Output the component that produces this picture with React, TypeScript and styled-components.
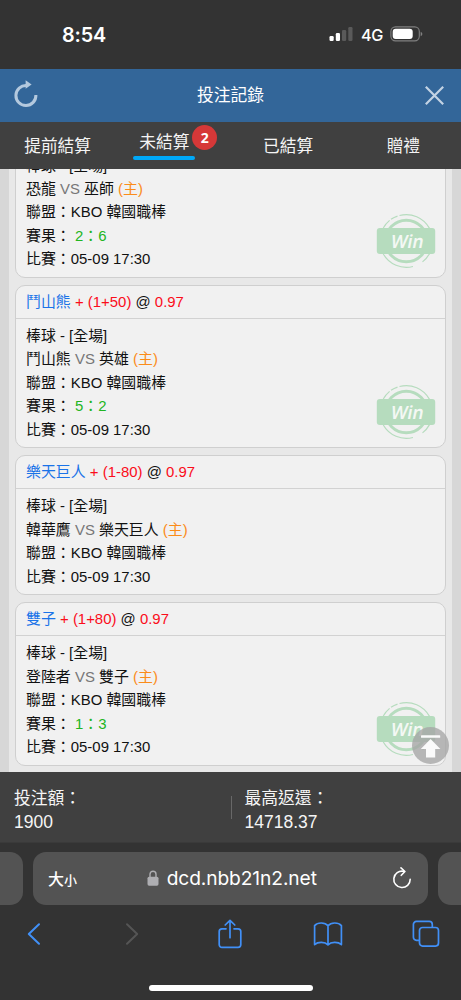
import React from "react";
import styled, { createGlobalStyle } from "styled-components";

const GlobalStyle = createGlobalStyle`
  * { box-sizing: border-box; }
  html, body { margin: 0; padding: 0; background: #333; }
  body { font-family: "Liberation Sans", "Noto Sans CJK TC", sans-serif; }
`;

const Screen = styled.div`
  width: 461px;
  height: 1000px;
  display: flex;
  flex-direction: column;
  overflow: hidden;
  background: #333;
`;

const StatusBar = styled.div`
  height: 69px;
  flex: none;
  display: flex;
  align-items: center;
  justify-content: space-between;
  padding: 0 38px 0 62px;
  color: #fff;
  font-family: Inter, sans-serif;
`;

const Clock = styled.span`
  font-size: 19.8px;
  font-weight: 600;
  line-height: 24px;
  letter-spacing: -0.1px;
`;

const StatusIcons = styled.div`
  display: flex;
  align-items: center;
  margin-top: -1px;
`;

const Network = styled.span`
  margin: 1px 7px 0 8px;
  font-size: 16.2px;
  font-weight: 500;
  line-height: 20px;
  letter-spacing: -0.3px;
`;

const Header = styled.header`
  height: 53px;
  flex: none;
  display: flex;
  align-items: center;
  justify-content: space-between;
  padding: 0 16px 0 13px;
  background: #336699;
`;

const RefreshIcon = styled.svg`
  margin-top: -4px;
`;

const Title = styled.h1`
  margin: 0 2px 0 0;
  font-size: 16.8px;
  font-weight: 400;
  line-height: 24px;
  color: #fff;
`;

const Tabs = styled.nav`
  height: 47px;
  flex: none;
  display: grid;
  grid-template-columns: repeat(4, 1fr);
  background: #404040;
`;

const Tab = styled.div<{ $active?: boolean }>`
  display: flex;
  justify-content: center;
  align-items: flex-start;
  padding: ${(p) => (p.$active ? "9px 17px 0 0" : "13px 0 0 0")};
  font-size: 16.7px;
  line-height: 24px;
  color: #f4f4f4;
`;

const TabLabel = styled.span<{ $active?: boolean }>`
  position: relative;
  padding: 0 6px;
  height: 28.5px;
  white-space: nowrap;
  &::after {
    content: "";
    display: ${(p) => (p.$active ? "block" : "none")};
    height: 4px;
    margin: 0.5px -6px 0;
    border-radius: 2px;
    background: #00a8f8;
  }
`;

const Count = styled.span`
  position: absolute;
  left: 59px;
  top: -6px;
  width: 25px;
  height: 25px;
  border-radius: 50%;
  background: #d63838;
  color: #fff;
  font-family: "Open Sans", sans-serif;
  font-size: 14px;
  font-weight: 700;
  line-height: 25px;
  text-align: center;
`;

const Records = styled.main`
  position: relative;
  height: 603px;
  flex: none;
  padding: 0 9px;
  background: #d7d7d7;
  overflow: hidden;
`;

const Panel = styled.div`
  height: 100%;
  display: flex;
  flex-direction: column;
  justify-content: flex-end;
  gap: 7px;
  padding: 0 6px 6.3px 6px;
  background: #e8e8e8;
`;

const Card = styled.article`
  position: relative;
  flex: none;
  border: 1.4px solid #cfcfcf;
  border-radius: 10px;
  background: #f1f1f1;
  font-size: 14.93px;
  color: #111;
`;

const CardTitle = styled.div`
  height: 33px;
  padding-left: 10px;
  border-bottom: 1.4px solid #d2d2d2;
  line-height: 31.4px;
`;

const CardBody = styled.div`
  padding: 4.9px 10px 6.3px;
`;

const Line = styled.div`
  height: 23.45px;
  line-height: 23.45px;
  white-space: pre;
`;

const tones = {
  team: "#1a73e8",
  odds: "#fb0d1b",
  versus: "#777",
  home: "#fb8c1a",
  score: "#22b522",
};

const Tone = styled.span<{ $tone: keyof typeof tones }>`
  color: ${(p) => tones[p.$tone]};
`;

const Stamp = styled.svg`
  position: absolute;
  right: 9.5px;
  bottom: 7.9px;
`;

const TopButton = styled.button`
  position: absolute;
  left: 412px;
  top: 558px;
  width: 37px;
  height: 37px;
  padding: 0;
  border: 0;
  border-radius: 50%;
  background: rgba(165, 165, 165, 0.78);
`;

const Summary = styled.section`
  height: 71px;
  flex: none;
  display: grid;
  grid-template-columns: 1fr 1fr;
  align-items: start;
  padding-top: 15px;
  background: #404040;
  border-bottom: 1px solid #3a3a3a;
  color: #f5f5f5;
`;

const Stat = styled.div<{ $divided?: boolean }>`
  position: relative;
  padding-left: 14px;
  font-size: 16.8px;
  line-height: 24px;
  &::before {
    content: "";
    display: ${(p) => (p.$divided ? "block" : "none")};
    position: absolute;
    left: 0;
    top: 9px;
    width: 1px;
    height: 23px;
    background: #686868;
  }
`;

const Amount = styled.div`
  font-size: 17.5px;
  line-height: 23px;
`;

const Browser = styled.footer`
  flex: 1;
  display: flex;
  flex-direction: column;
  background: #333;
`;

const AddressRow = styled.div`
  display: grid;
  grid-template-columns: 23px 395px 23px;
  gap: 10px;
  padding-top: 9px;
`;

const SideTab = styled.div<{ $side: "left" | "right" }>`
  height: 53px;
  border-radius: ${(p) => (p.$side === "left" ? "0 13px 13px 0" : "13px 0 0 13px")};
  background: #535353;
`;

const Address = styled.div`
  height: 53px;
  display: flex;
  align-items: center;
  justify-content: space-between;
  padding: 0 16px 1px 15px;
  border-radius: 13px;
  background: #535353;
  color: #fff;
`;

const TextSize = styled.span`
  width: 32px;
  margin-right: -8px;
  font-family: "Noto Sans CJK TC", sans-serif;
  font-size: 16px;
  font-weight: 500;
  white-space: nowrap;
  small { font-size: 13px; }
`;

const Url = styled.span`
  display: flex;
  align-items: center;
  gap: 7.5px;
  font-family: Inter, sans-serif;
  font-size: 19.2px;
  letter-spacing: -0.1px;
`;

const Toolbar = styled.div`
  display: flex;
  align-items: center;
  justify-content: space-between;
  height: 60px;
  padding: 0 19px 2px 18px;
`;

const Tool = styled.span`
  width: 32px;
  display: flex;
  justify-content: center;
`;

const HomeIndicator = styled.div`
  width: 164px;
  height: 6px;
  margin: 20px auto 0;
  border-radius: 3px;
  background: #fff;
`;

const WinStamp = () => (
  <Stamp width="60" height="56" viewBox="0 0 60 56" fill="none" stroke="#b6dcbe">
    <circle cx="30.3" cy="28" r="20.8" strokeWidth="3" />
    <path
      strokeWidth="1.2"
      d="M7.3 15A26.4 26.4 0 0 1 13.6 7.4M15 6.3A26.4 26.4 0 0 1 21.5 3.1M23.5 2.5A26.4 26.4 0 0 1 53.5 15.4M53.5 40.6A26.4 26.4 0 0 1 46.5 48.9M37 53.5A26.4 26.4 0 0 1 7.3 41"
    />
    <rect x="0.8" y="15" width="58.4" height="26" rx="3" fill="#b6dcbe" stroke="none" />
    <text
      transform="translate(14 34.5) skewX(-11)"
      fill="#f4f8f4"
      stroke="none"
      fontFamily="Noto Sans"
      fontWeight="600"
      fontSize="18.4"
      textLength="32.5"
      lengthAdjust="spacingAndGlyphs"
    >
      Win
    </text>
  </Stamp>
);

type Bet = {
  team: string;
  handicap: string;
  away: string;
  home: string;
  score?: string;
};

const bets: Bet[] = [
  { team: "", handicap: "", away: "恐龍", home: "巫師", score: "2：6" },
  { team: "鬥山熊", handicap: "(1+50)", away: "鬥山熊", home: "英雄", score: "5：2" },
  { team: "樂天巨人", handicap: "(1-80)", away: "韓華鷹", home: "樂天巨人" },
  { team: "雙子", handicap: "(1+80)", away: "登陸者", home: "雙子", score: "1：3" },
];

const BetCard = ({ bet }: { bet: Bet }) => (
  <Card>
    {bet.team && (
      <CardTitle>
        <Tone $tone="team">{bet.team}</Tone> <Tone $tone="odds">+ {bet.handicap}</Tone> @{" "}
        <Tone $tone="odds">0.97</Tone>
      </CardTitle>
    )}
    <CardBody>
      <Line>棒球 - [全場]</Line>
      <Line>
        {bet.away} <Tone $tone="versus">VS</Tone> {bet.home} <Tone $tone="home">(主)</Tone>
      </Line>
      <Line>聯盟：KBO 韓國職棒</Line>
      {bet.score && (
        <Line>
          賽果： <Tone $tone="score">{bet.score}</Tone>
        </Line>
      )}
      <Line>比賽：05-09 17:30</Line>
    </CardBody>
    {bet.score && <WinStamp />}
  </Card>
);

export default function App() {
  return (
    <Screen>
      <GlobalStyle />
      <StatusBar>
        <Clock>8:54</Clock>
        <StatusIcons>
          <svg width="24" height="16" viewBox="0 0 24 16" fill="#fff">
            <rect x="0.5" y="10" width="4.2" height="5" rx="1.2" />
            <rect x="6.8" y="7" width="4.2" height="8" rx="1.2" />
            <rect x="13" y="4" width="4.2" height="11" rx="1.2" fill="#5a5a5a" />
            <rect x="19.3" y="1" width="4.2" height="14" rx="1.2" fill="#5a5a5a" />
          </svg>
          <Network>4G</Network>
          <svg width="33" height="16" viewBox="0 0 33 16">
            <rect x="0.9" y="0.9" width="28.4" height="14" rx="4.6" fill="none" stroke="#808080" strokeWidth="1.1" />
            <rect x="2.7" y="2.7" width="20" height="10.4" rx="3" fill="#fff" />
            <path d="M30.7 5.7Q32.4 6.5 32.4 8T30.7 10.3Z" fill="#808080" />
          </svg>
        </StatusIcons>
      </StatusBar>

      <Header>
        <RefreshIcon width="26" height="30" viewBox="0 0 26 30" fill="none" stroke="#b4c9de">
          <path d="M13.6 6.5A10 10 0 1 0 22.9 16" strokeWidth="3" />
          <path d="M12.6 1.2V9.7L18.6 5.5Z" fill="#b4c9de" stroke="none" />
        </RefreshIcon>
        <Title>投注記錄</Title>
        <svg width="21" height="21" viewBox="0 0 21 21" stroke="#c3d3e4" strokeWidth="2.2">
          <path d="M1.8 1.8 19.2 19.2M19.2 1.8 1.8 19.2" />
        </svg>
      </Header>

      <Tabs>
        <Tab><TabLabel>提前結算</TabLabel></Tab>
        <Tab $active>
          <TabLabel $active>
            未結算<Count>2</Count>
          </TabLabel>
        </Tab>
        <Tab><TabLabel>已結算</TabLabel></Tab>
        <Tab><TabLabel>贈禮</TabLabel></Tab>
      </Tabs>

      <Records>
        <Panel>
          {bets.map((bet) => (
            <BetCard key={bet.away} bet={bet} />
          ))}
        </Panel>
        <TopButton aria-label="Top">
          <svg width="37" height="37" viewBox="0 0 37 37" fill="#fafafa">
            <rect x="9" y="8.2" width="19.2" height="2.6" rx="0.6" />
            <path d="M18.6 12 28.4 22H23.2V30.5H14V22H8.8Z" />
          </svg>
        </TopButton>
      </Records>

      <Summary>
        <Stat>
          投注額：
          <Amount>1900</Amount>
        </Stat>
        <Stat $divided>
          最高返還：
          <Amount>14718.37</Amount>
        </Stat>
      </Summary>

      <Browser>
        <AddressRow>
          <SideTab $side="left" />
          <Address>
            <TextSize>大<small>小</small></TextSize>
            <Url>
              <svg width="12" height="16" viewBox="0 0 12 16">
                <path d="M3 7V4.2a3 3 0 0 1 6 0V7" fill="none" stroke="#aeaeb2" strokeWidth="1.4" />
                <rect x="0.5" y="6.7" width="11" height="9" rx="1.6" fill="#aeaeb2" />
              </svg>
              dcd.nbb21n2.net
            </Url>
            <svg width="20" height="22" viewBox="0 0 20 22" fill="none" stroke="#fff" strokeWidth="1.6" strokeLinecap="round" strokeLinejoin="round">
              <path d="M11.6 4.3A8.2 8.2 0 1 0 18.2 12.3" />
              <path d="M9 0.9 12.9 4.5 9.3 8.3" />
            </svg>
          </Address>
          <SideTab $side="right" />
        </AddressRow>
        <Toolbar>
          <Tool>
            <svg width="16" height="24" viewBox="0 0 16 24" fill="none" stroke="#4190f7" strokeWidth="2" strokeLinecap="round" strokeLinejoin="round">
              <path d="M13 2.2 2.8 12 13 21.8" />
            </svg>
          </Tool>
          <Tool>
            <svg width="16" height="24" viewBox="0 0 16 24" fill="none" stroke="#555" strokeWidth="2" strokeLinecap="round" strokeLinejoin="round">
              <path d="M3 2.2 13.2 12 3 21.8" />
            </svg>
          </Tool>
          <Tool>
            <svg width="24" height="30" viewBox="0 0 24 30" fill="none" stroke="#4190f7" strokeWidth="1.7" strokeLinecap="round" strokeLinejoin="round">
              <path d="M8 9.8H4A2.8 2.8 0 0 0 1.2 12.6V25.6A2.8 2.8 0 0 0 4 28.4H20A2.8 2.8 0 0 0 22.8 25.6V12.6A2.8 2.8 0 0 0 20 9.8H16" />
              <path d="M12 18.7V1.6M7.2 6 12 1.3 16.8 6" />
            </svg>
          </Tool>
          <Tool>
            <svg width="30" height="26" viewBox="0 0 30 26" fill="none" stroke="#4190f7" strokeWidth="1.7" strokeLinejoin="round">
              <path d="M15 4.8C12 1.3 5 .9 1.6 4.6V23.6C5 20.6 12 20.8 15 23.8C18 20.8 25 20.6 28.4 23.6V4.6C25 .9 18 1.3 15 4.8ZV23.8" />
            </svg>
          </Tool>
          <Tool>
            <svg width="28" height="28" viewBox="0 0 28 28" fill="none" stroke="#4190f7" strokeWidth="1.7">
              <path d="M7.5 20.3H4.4A3 3 0 0 1 1.4 17.3V4.4A3 3 0 0 1 4.4 1.4H17.3A3 3 0 0 1 20.3 4.4V7.4" />
              <rect x="7.5" y="7.5" width="19" height="18.6" rx="3" />
            </svg>
          </Tool>
        </Toolbar>
        <HomeIndicator />
      </Browser>
    </Screen>
  );
}
